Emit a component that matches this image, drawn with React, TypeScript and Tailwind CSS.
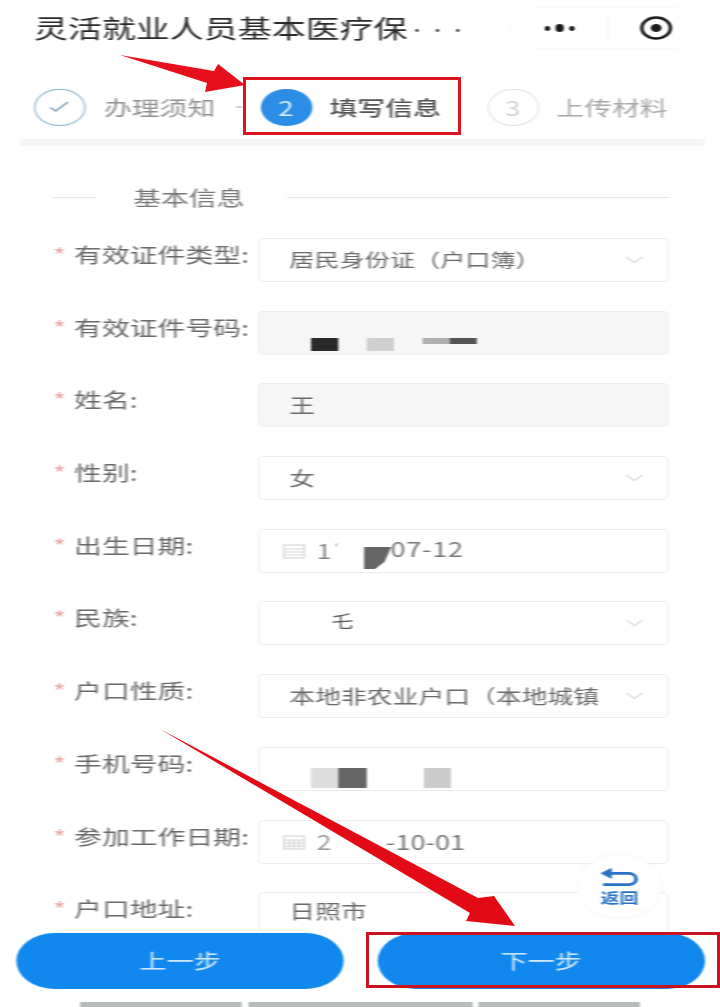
const font = { fontFamily: '"Noto Sans CJK SC", "Noto Sans", sans-serif' };

function Chevron() {
  return (
    <svg width="16" height="10" viewBox="0 0 16 10" className="ml-auto mr-[16px] shrink-0" fill="none" stroke="#dcdcdc" strokeWidth="1.3">
      <path d="M2 2l6 5.5L14 2" />
    </svg>
  );
}

function Cal({ dense }: { dense?: boolean }) {
  return (
    <svg width="17" height="16" viewBox="0 0 17 16" className="shrink-0" fill="none" stroke="#d6d6d6" strokeWidth="1.2">
      <rect x="1" y="2" width="15" height="13" />
      <path d="M1 6h15M1 9h15M1 12h15" />
      {dense ? <path d="M5 6v9M8.500 6v9M12 6v9" /> : null}
    </svg>
  );
}

function Row({ label, disabled, children }: { label: string; disabled?: boolean; children: React.ReactNode }) {
  return (
    <div className="flex h-[44px] mb-[28.700px]">
      <div className="w-[151px] flex items-start pt-[2px] text-[20.500px] leading-[28px] text-[#6a6a6a] whitespace-nowrap">
        <span className="w-[15.500px] text-[#e9a7a7]">*</span>
        <span>{label}</span>
      </div>
      <div
        className={`w-[302px] h-[44px] rounded-[4px] border border-[#ededed] flex items-center text-[19px] text-[#6a6a6a] whitespace-nowrap overflow-hidden ${
          disabled ? 'bg-[#f6f6f6]' : 'bg-white'
        }`}
      >
        {children}
      </div>
    </div>
  );
}

function Block({ w, h, c, ml }: { w: string; h: string; c: string; ml: string }) {
  return <span className={`block ${w} ${h} ${c} ${ml}`} />;
}

export default function App() {
  return (
    <div className="relative w-[720px] h-[1007px] overflow-hidden bg-white" style={font}>
      <div className="relative w-[530px] h-[1007px] origin-top-left scale-x-[1.3585] blur-[0.7px]">
        {/* Header */}
        <header className="h-[56px] flex items-center pl-[25px] pr-[11px]">
          <span className="text-[25px] text-[#2a2a2a] whitespace-nowrap">灵活就业人员基本医疗保</span>
          <span className="text-[14px] tracking-[1px] text-[#555] whitespace-nowrap mt-[3px]">···</span>
          <div className="ml-auto w-[144px] h-[42px] rounded-full border border-[#fafafa] flex items-center">
            <div className="w-[71px] flex justify-center items-center gap-[4px]">
              <span className="w-[4px] h-[5px] rounded-full bg-[#1c1c1c]" />
              <span className="w-[6px] h-[8px] rounded-full bg-[#1c1c1c]" />
              <span className="w-[4px] h-[5px] rounded-full bg-[#1c1c1c]" />
            </div>
            <span className="w-px h-[24px] bg-[#f6f6f6]" />
            <div className="flex-1 flex justify-center">
              <svg width="26" height="26" viewBox="0 0 26 26">
                <circle cx="13" cy="13" r="10.500" fill="none" stroke="#1c1c1c" strokeWidth="2.600" />
                <circle cx="13" cy="13" r="4" fill="#1c1c1c" />
              </svg>
            </div>
          </div>
        </header>

        {/* Steps */}
        <div className="mt-[32px] h-[38px] flex items-center pl-[25px] text-[20.500px] whitespace-nowrap">
          <span className="w-[37.500px] h-[37px] rounded-full border-[1.500px] border-[#86b4ca] flex items-center justify-center shrink-0">
            <svg width="17" height="14" viewBox="0 0 17 14" fill="none" stroke="#7f9fb2" strokeWidth="1.500">
              <path d="M2 7.500l4 3.500L15 2" />
            </svg>
          </span>
          <span className="ml-[14px] text-[#929292]">办理须知</span>
          <span className="ml-[15px] w-[4px] h-[2px] bg-[#c9c9c9]" />
          <span className="ml-[14px] w-[38px] h-[37px] rounded-full bg-[#2b8de6] text-[#dceeff] flex items-center justify-center shrink-0">2</span>
          <span className="ml-[13px] text-[#555] font-medium">填写信息</span>
          <span className="ml-[34px] w-[38px] h-[37px] rounded-full border-[1.500px] border-[#e2e2e2] text-[#d2d2d2] flex items-center justify-center shrink-0">3</span>
          <span className="ml-[13px] text-[#a8a8a8]">上传材料</span>
        </div>
        <div className="mt-[13px] ml-[15px] w-[504px] h-[7px] bg-[#f6f6f6]" />

        {/* Section title */}
        <div className="mt-[37px] h-[28px] flex items-center pl-[38px] text-[20.500px] text-[#777]">
          <span className="w-[33px] h-px bg-[#e6e6e6]" />
          <span className="ml-[27px] whitespace-nowrap">基本信息</span>
          <span className="ml-[31px] w-[282px] h-px bg-[#e6e6e6]" />
        </div>

        {/* Form */}
        <div className="mt-[27px] pl-[39px]">
          <Row label="有效证件类型:">
            <span className="ml-[22px] text-[18.500px]">居民身份证（户口簿）</span>
            <Chevron />
          </Row>
          <Row label="有效证件号码:" disabled>
            <div className="flex self-end mb-[3px] ml-[38px]">
              <Block w="w-[20px]" h="h-[13px]" c="bg-[#2a2a2a]" ml="ml-0" />
              <Block w="w-[20px]" h="h-[13px]" c="bg-[#cfcfcf]" ml="ml-[21px]" />
              <Block w="w-[20px]" h="h-[6px]" c="bg-[#b0b0b0]" ml="ml-[21px]" />
              <Block w="w-[20px]" h="h-[6px]" c="bg-[#555555]" ml="ml-0" />
            </div>
          </Row>
          <Row label="姓名:" disabled>
            <span className="ml-[22px]">王</span>
          </Row>
          <Row label="性别:">
            <span className="ml-[22px]">女</span>
            <Chevron />
          </Row>
          <Row label="出生日期:">
            <span className="ml-[17px]"><Cal /></span>
            <span className="ml-[8px] text-[#8a8a8a] text-[20px]">1</span>
            <span className="ml-[2px] text-[#aaa] text-[12px] -mt-[6px]">'</span>
            <svg width="20" height="22" viewBox="0 0 20 22" className="ml-[19px] mt-[14px] shrink-0">
              <path d="M0 0h20l-5 15-7 7H0z" fill="#666" />
            </svg>
            <span className="text-[#777] text-[20px] tracking-[0.500px] -ml-[1px] -mt-[4px]">07-12</span>
          </Row>
          <Row label="民族:">
            <span className="ml-[53px] text-[16px] text-[#555] -mt-[6px]">乇</span>
            <Chevron />
          </Row>
          <Row label="户口性质:">
            <span className="ml-[22px] text-[19px]">本地非农业户口（本地城镇</span>
            <Chevron />
          </Row>
          <Row label="手机号码:">
            <div className="flex self-end mb-[2px] ml-[38px]">
              <Block w="w-[20px]" h="h-[20px]" c="bg-[#dddddd]" ml="ml-0" />
              <Block w="w-[21px]" h="h-[20px]" c="bg-[#666666]" ml="ml-0" />
              <Block w="w-[20px]" h="h-[20px]" c="bg-[#cccccc]" ml="ml-[42px]" />
            </div>
          </Row>
          <Row label="参加工作日期:">
            <span className="ml-[17px]"><Cal dense /></span>
            <span className="ml-[8px] text-[#999] text-[20px]">2</span>
            <span className="ml-[40px] text-[#777] text-[20px]">-10-01</span>
          </Row>
          <Row label="户口地址:">
            <span className="ml-[22px] -mt-[5px]">日照市</span>
          </Row>
        </div>

        {/* Floating back button */}
        <div className="absolute left-[425px] top-[855px] w-[62px] h-[62px] rounded-full bg-white shadow-[0_0_4px_rgba(0,0,0,0.06)] flex flex-col items-center justify-center text-[#2a72c6]">
          <svg width="30" height="22" viewBox="0 0 32 22" fill="none" stroke="#2a72c6" strokeWidth="3">
            <path d="M8 6h15c8 0 8 12 0 12H3" />
            <path d="M10 0v12L1 6z" fill="#2a72c6" stroke="none" />
          </svg>
          <span className="text-[14px] leading-[16px] font-bold">返回</span>
        </div>

        {/* Fixed bottom bar */}
        <div className="absolute left-0 right-0 bottom-0 h-[75px] bg-white pt-[1px]">
          <div className="flex justify-between pl-[12px] pr-[11px]">
            <button className="w-[241px] h-[56px] rounded-full bg-[#1088ee] text-[20px] text-[#cfe6fb]">上一步</button>
            <button className="w-[241.500px] h-[56px] rounded-full bg-[#1088ee] text-[20px] text-[#cfe6fb]">下一步</button>
          </div>
          <div className="mt-[13px] flex pl-[59px] gap-[4.500px]">
            <span className="w-[119px] h-[6px] bg-[#b7bdba]" />
            <span className="w-[165px] h-[6px] bg-[#b7bdba]" />
            <span className="w-[119px] h-[6px] bg-[#b7bdba]" />
          </div>
        </div>
      </div>

      {/* Annotation layer */}
      <div className="absolute left-[243px] top-[77px] w-[218px] h-[58px] border-[3px] border-[#dc1420]" />
      <div className="absolute left-[366px] top-[932px] w-[354px] h-[56px] border-[3px] border-[#c8141f]" />
      <svg className="absolute left-0 top-0" width="720" height="1007" viewBox="0 0 720 1007">
        <polygon points="120,55 214,71 218,64 245,85 205,92 207,83" fill="#e5101c" />
        <polygon points="160,729 478,898 494,896 515,926 466,921 470,913" fill="#e20a14" />
      </svg>
    </div>
  );
}
